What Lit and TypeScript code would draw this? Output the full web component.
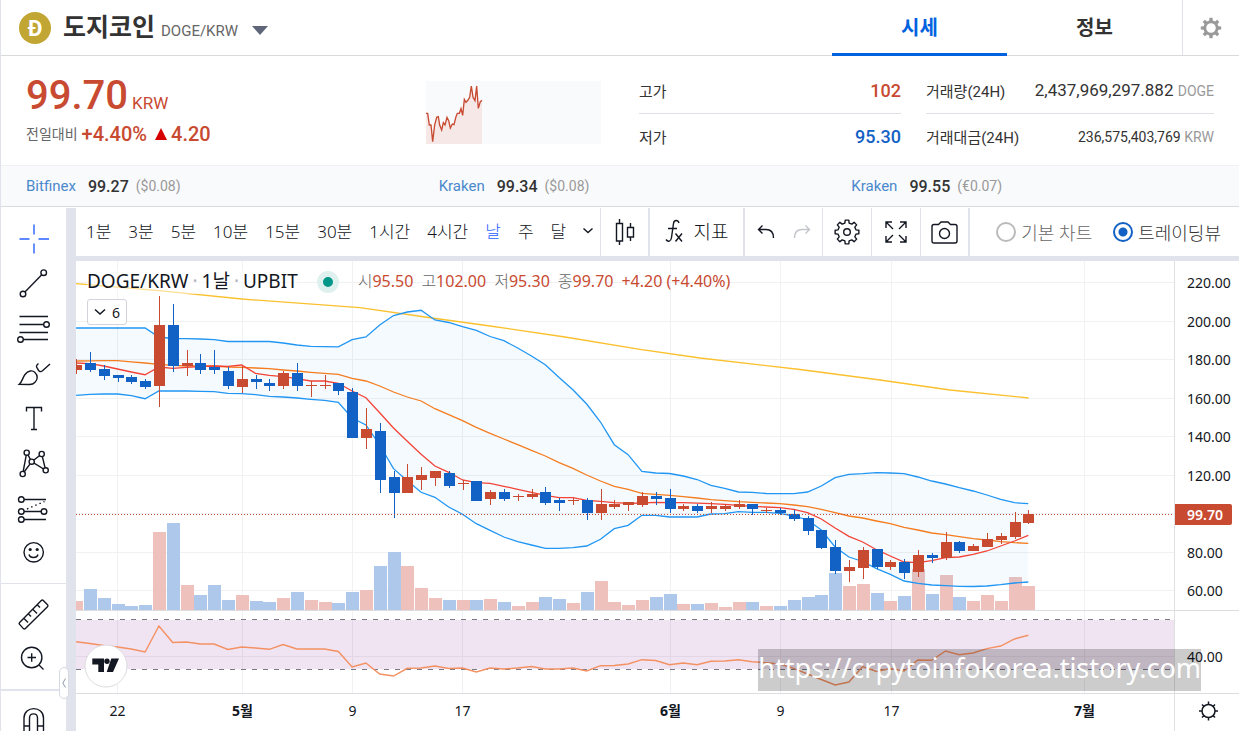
import { LitElement, html, svg, css } from "lit";
import { customElement, state } from "lit/decorators.js";
import { classMap } from "lit/directives/class-map.js";

const UP = "#c84a31";
const DOWN = "#1261c4";

// One entry per day: [up, body top, body bottom, high, low, volume top, oscillator]
type Day = [number, number, number, number, number, number, number];
const FIRST = -3;
const DAYS: Day[] = [
  [1, 365, 370, 359, 374, 601, 641.7], [0, 363, 370, 352, 372, 589, 643.5],
  [0, 369, 376, 365, 380, 598, 645.5], [0, 375, 378, 375, 382, 604, 647],
  [0, 377, 382, 375, 384, 606, 649], [0, 381, 387, 379, 389, 605, 652],
  [1, 325, 386, 296, 407, 532, 626], [0, 325, 366, 304, 372, 523, 642.5],
  [1, 363, 366, 350, 376, 585, 642], [0, 363, 370, 354, 374, 595, 644],
  [0, 367, 370, 350, 374, 585, 644], [0, 371, 386, 367, 389, 600, 649.5],
  [1, 379, 387, 366, 393, 595, 647], [0, 379, 382, 375, 389, 601, 648],
  [0, 383, 386, 379, 391, 602, 649.3], [1, 373, 386, 371, 389, 598, 644.5],
  [0, 373, 386, 363, 391, 592, 649], [1, 385, 386, 381, 397, 600, 649],
  [1, 385, 386, 375, 389, 602, 649], [0, 383, 391, 383, 395, 603, 651.5],
  [0, 392, 438, 388, 438, 592, 667], [1, 429, 438, 408, 449, 590, 663],
  [0, 431, 480, 423, 493, 566, 674], [0, 477, 493, 471, 518, 552, 676],
  [1, 477, 493, 464, 493, 566, 668.3], [1, 475, 480, 467, 490, 588, 668],
  [1, 471, 478, 471, 486, 598, 666], [0, 473, 486, 471, 488, 600, 668.5],
  [1, 483, 484, 480, 490, 600, 668], [0, 481, 501, 481, 501, 600, 672],
  [1, 492, 499, 490, 505, 599, 668], [0, 492, 499, 489, 501, 602, 669],
  [1, 496, 497, 494, 501, 606, 668], [1, 494, 497, 489, 499, 602, 666.5],
  [0, 492, 503, 487, 505, 597, 669], [0, 500, 503, 498, 511, 599, 669],
  [1, 500, 501, 498, 505, 603, 668], [0, 500, 513, 498, 520, 592, 671],
  [1, 504, 513, 489, 520, 581, 665.7], [1, 504, 507, 500, 509, 602, 665.5],
  [1, 502, 505, 502, 511, 605, 664], [1, 496, 505, 492, 507, 600, 659.7],
  [0, 496, 499, 492, 505, 597, 660.5], [0, 498, 509, 489, 513, 594, 664.7],
  [1, 506, 509, 504, 511, 604, 663], [0, 506, 511, 504, 513, 604, 664.7],
  [1, 506, 509, 502, 513, 603, 661.3], [1, 506, 509, 504, 511, 607, 661],
  [1, 504, 507, 500, 509, 602, 659.7], [0, 504, 509, 504, 515, 602, 661.8],
  [1, 510, 511, 508, 513, 606, 662.7], [0, 510, 513, 508, 515, 606, 664],
  [0, 514, 519, 510, 521, 600, 668.3], [0, 518, 531, 516, 535, 597, 674],
  [0, 530, 548, 530, 549, 595, 679.5], [0, 547, 571, 540, 574, 573, 685],
  [1, 567, 571, 560, 582, 586, 682], [1, 550, 568, 547, 579, 584, 666.5],
  [0, 549, 567, 549, 569, 593, 671.5], [1, 562, 567, 560, 570, 601, 668.5],
  [0, 562, 573, 559, 579, 596, 671], [1, 555, 572, 550, 577, 569, 660],
  [0, 555, 558, 553, 563, 594, 660.3], [1, 542, 558, 532, 560, 575, 651],
  [0, 542, 551, 541, 553, 597, 654.7], [1, 546, 551, 544, 551, 601, 653],
  [1, 539, 547, 533, 547, 595, 648.6], [1, 536, 540, 533, 544, 601, 646],
  [1, 522, 537, 512, 539, 577, 639], [1, 514, 523, 510, 524, 586, 635.3],
];

const UPPER = [328, 328, 328, 328, 328, 328, 337, 338.5, 338.7, 339, 339.7, 341.5, 341.5, 341.5, 341.5, 343, 345, 346.3, 346.7, 346.8, 339.7, 337, 325, 315.5, 312, 310.3, 320, 322.5, 326.7, 330.3, 336.5, 340.7, 348, 356, 364.7, 377.5, 389.7, 404, 422, 444.7, 454.7, 471.5, 473, 473.5, 476, 479.5, 485.3, 488.3, 492, 492.3, 493.5, 493.7, 493.7, 492, 486, 477.7, 474.3, 473.7, 472.7, 473, 473.7, 477, 481, 484, 487.7, 491, 495, 499.3, 502.7, 503.7];
const LOWER = [395.3, 394.3, 394, 394, 395.7, 398.7, 391, 391, 391, 391.3, 391.7, 393.3, 393.7, 394.7, 396.3, 397, 398, 399.3, 400.3, 402.3, 418, 425, 445, 468.7, 480.7, 492.3, 497.3, 507, 514.3, 523.7, 530.3, 537, 541.7, 545, 548.3, 548.3, 547.7, 546, 539.3, 528.7, 525.3, 515.3, 515.3, 517, 517, 517, 514, 513.7, 511.7, 512.3, 512.3, 513.3, 516, 520, 530, 547, 557, 561.5, 568.7, 574.3, 581, 583.3, 585, 585.7, 586.3, 586.5, 586, 584.7, 583, 582];
const BASIS = [361, 360.8, 360.7, 360.7, 361.8, 363, 364.3, 365.3, 366, 366, 366, 367, 367.3, 368, 368.7, 370, 371, 372.3, 373.3, 374.3, 378.3, 381, 386, 392, 397, 401, 408.7, 414.7, 420.7, 427.3, 433.3, 439, 444.7, 450.3, 456, 462.7, 468.3, 475, 481, 486.3, 489.3, 493.3, 494.3, 495.3, 496.7, 498, 499.7, 500.7, 501.7, 502.3, 503, 503.7, 505, 506.7, 509.3, 512.7, 516, 518, 521, 523.7, 527.3, 530, 533, 534.7, 536.7, 538.7, 540, 541.7, 542.7, 543.3];
const FAST = [363, 363.7, 366, 369, 372, 374.7, 367, 368.3, 367.3, 366.7, 366, 366.3, 365, 373.3, 375.3, 376.7, 378.7, 381, 381, 383.3, 391, 397.7, 412.7, 428, 441.3, 454.3, 466, 472.3, 480, 482.7, 483.3, 486.3, 489.3, 492.3, 495.3, 497.7, 497.7, 500.3, 501.3, 502.7, 503.3, 503, 502.3, 502.7, 502.7, 503.2, 503.7, 504.3, 505.3, 506.3, 507, 507.7, 509.3, 512.7, 519, 528, 536.3, 542, 549.7, 556, 562, 562.7, 560.7, 557.7, 557, 554.3, 551, 546, 541, 535.3];
const SLOW = "76,283.7 159,290.7 242,299 360,307.7 425,317 490,326 565,337 640,349.3 700,358 800,369.5 880,380 950,390 1028.6,398";

const dayX = (n: number) => 117.5 + 13.8 * (n + FIRST);
const line = (ys: number[]) => ys.map((y, n) => `${dayX(n).toFixed(1)},${y}`);

const PRICES: [string, number][] = [["220.00", 283], ["200.00", 322], ["180.00", 360], ["160.00", 399], ["140.00", 437], ["120.00", 476], ["80.00", 553], ["60.00", 591]];
const DATES: [string, number, boolean][] = [["22", 117.5, false], ["5월", 242.5, true], ["9", 352.5, false], ["17", 462.5, false], ["6월", 670.5, true], ["9", 780.5, false], ["17", 891.5, false], ["7월", 1084.5, true]];

/** Outline of a cog with flat teeth. */
function cog(cx: number, cy: number, outer: number, inner: number, teeth = 8): string {
  const step = (Math.PI * 2) / teeth;
  const pts: string[] = [];
  for (let t = 0; t < teeth; t++) {
    const a = t * step - Math.PI / 2;
    for (const [r, d] of [[inner, -0.3], [outer, -0.19], [outer, 0.19], [inner, 0.3]]) {
      pts.push(`${(cx + r * Math.cos(a + d * step)).toFixed(2)} ${(cy + r * Math.sin(a + d * step)).toFixed(2)}`);
    }
  }
  return `M${pts.join("L")}Z`;
}

interface Tool { name: string; box: string; art: unknown; }
const ring = (x: number, y: number, r = 2.8) => svg`<circle cx=${x} cy=${y} r=${r} fill="#fff"></circle>`;

const TOOLS: Tool[] = [
  { name: "십자선", box: "17 222 34 34", art: svg`<path stroke="#2962ff" d="M34 224.500v10M34 243.500v10M19.500 239h10M38.500 239h10.500"></path>` },
  { name: "추세선", box: "17 267 34 34", art: svg`<path d="M23 294L43.700 272.700"></path>${ring(23, 294)}${ring(43.7, 272.7)}` },
  { name: "피보나치", box: "17 312 34 34", art: svg`<path d="M19.500 316.500H48M19.500 324.500H44M19.500 332.500H48M22 339.500H48"></path>${ring(46.5, 324.5)}${ring(20.5, 339.5)}` },
  { name: "브러시", box: "17 357 34 34", art: svg`<path d="M19.300 384.300C22 382 22.500 378 25 374.500C28 370.500 32.500 369.800 35 372.500C38 375.500 37.800 379.500 35 382.200C33.500 384 32 384.500 29.500 384.500ZM38.500 363.500C36 365.500 36 367 37.500 368.500C38.500 371.500 40.500 372.500 42.500 370.800L50 364"></path>` },
  { name: "텍스트", box: "17 402 34 34", art: svg`<path d="M26.500 411.500v-4h15v4M34 407.500v21.500M31 429.500h6"></path>` },
  { name: "패턴", box: "17 447 34 34", art: svg`<path d="M22.700 474L26.700 452.700L31.700 461.700L41.700 454L45.700 470.300L31.700 461.700Z"></path>${ring(26.7, 452.7, 2.6)}${ring(41.7, 454, 2.6)}${ring(31.7, 461.7, 2.6)}${ring(22.7, 474, 2.6)}${ring(45.7, 470.3, 2.6)}` },
  { name: "예측", box: "17 492 34 34", art: svg`<path d="M24 499.500H46M24 511.500H41M24 519.500H46"></path><path stroke-dasharray="1.500 3" d="M27 509L44.500 501.500"></path>${ring(21.3, 499.5)}${ring(21.3, 511.5)}${ring(44, 511.5)}${ring(21.3, 519.5)}` },
  { name: "아이콘", box: "17 537 34 34", art: svg`<circle cx="33.700" cy="552.300" r="9.700"></circle><path d="M29 554.500C30 558.500 37 558.500 38 554.500"></path><g fill="#131722" stroke="none"><circle cx="30.200" cy="549.500" r="1.600"></circle><circle cx="37.200" cy="549.500" r="1.600"></circle></g>` },
  { name: "측정", box: "17 597 34 34", art: svg`<path d="M19.600 622.400Q18.600 623.400 19.600 624.400L23.400 628.600Q24.400 629.600 25.400 628.600L47.500 606.800Q48.500 605.800 47.500 604.800L43.300 600.500Q42.300 599.500 41.300 600.500ZM24 618.500l4 4M28.500 614l2.500 2.500M33 609.500l4 4M37.500 605l2.500 2.500"></path>` },
  { name: "확대", box: "17 642 34 34", art: svg`<circle cx="31.700" cy="657.500" r="10.200"></circle><path d="M39 665l4.500 4.500M27.500 657.500h8.500M31.700 653.200v8.600"></path>` },
  { name: "자석", box: "17 705 34 34", art: svg`<path d="M24 733V718C24 705.500 43.500 705.500 43.500 718V733M29.500 733V718C29.500 712.500 37.500 712.500 37.500 718V733M24 726h5.500M37.500 726h6"></path>` },
];

@customElement("app-root")
export class AppRoot extends LitElement {
  @state() private interval = "날";
  @state() private mode = "tv";

  static styles = css`
    :host { display: flex; flex-direction: column; height: 100vh; overflow: hidden; box-sizing: border-box; border-left: 1px solid #e0e3eb; background: #fff; color: #333; font-family: Roboto, "Noto Sans CJK KR", sans-serif; font-size: 15px; }
    * { box-sizing: border-box; }
    button { border: 0; padding: 0; background: none; font: inherit; color: inherit; cursor: pointer; }
    svg { display: block; }
    a { text-decoration: none; color: inherit; }
    h1, dl, dd, dt, p { margin: 0; font-weight: 400; }

    .top { display: flex; height: 56px; flex: none; border-bottom: 1px solid #d8dade; }
    .coin { display: flex; align-items: center; flex: 1; padding-left: 18px; }
    .name { margin-left: 12px; font-size: 25px; font-weight: 700; line-height: 54px; }
    .pair { margin: 7px 14px 0 6px; font-size: 15px; color: #666; }
    .tabs { display: flex; }
    .tab { width: 175px; height: 56px; font-size: 20px; font-weight: 700; line-height: 56px; text-align: center; border-bottom: 3px solid transparent; }
    .tab.on { color: #0062df; border-color: #0062df; }
    .settings { width: 57px; height: 55px; display: grid; place-items: center; border-left: 1px solid #e0e0e6; }

    .info { display: flex; flex: none; height: 109px; padding: 15px 25px 0; }
    .now { flex: 1; color: #c84a31; }
    .price { display: flex; align-items: baseline; gap: 4px; font-size: 17px; line-height: 20px; }
    .price strong { font-size: 40px; font-weight: 500; line-height: 50px; }
    .change { display: flex; align-items: center; gap: 4px; font-size: 20px; font-weight: 500; line-height: 26px; }
    .change span { font-size: 14px; font-weight: 400; color: #666; }
    .change svg { margin: 0 0 0 4px; }
    .spark { width: 175px; height: 63px; margin: 10px 38px 0 0; background: #f9fafc; }
    .stats { width: 262px; margin-right: 25px; }
    .stats.wide { width: 288px; margin-right: 0; }
    .stats div { display: flex; justify-content: space-between; align-items: center; height: 45px; font-size: 15px; }
    .stats div:first-child { height: 43px; border-bottom: 1px solid #e0e0e6; padding-bottom: 4px; }
    .stats dd { font-size: 18px; font-weight: 500; }
    .stats.wide dd { font-size: 17px; font-weight: 400; }
    .wide dd small { font-size: 14px; color: #999; }
    .stats.wide dd.small { font-size: 14px; }
    .high { color: #c84a31; }
    .low { color: #1261c4; }

    .markets { display: flex; flex: none; height: 42px; background: #f9fafc; border-top: 1px solid #f1f1f4; border-bottom: 1px solid #d8dade; }
    .markets p { display: flex; flex: 1; align-items: center; padding-left: 25px; }
    .markets a { color: #4a89cc; margin-right: 12px; }
    .markets b { font-weight: 500; font-size: 16px; margin-right: 7px; }
    .markets span { font-size: 14px; color: #999; }

    .work { display: flex; flex: 1; min-height: 0; padding-top: 1px; font-family: "Noto Sans", "Noto Sans CJK KR", sans-serif; color: #131722; }
    .tools { width: 65px; flex: none; padding-top: 8px; overflow: hidden; }
    .tools button { display: grid; place-items: center; width: 65px; height: 45px; }
    .tools svg { width: 34px; height: 34px; fill: none; stroke: #131722; stroke-width: 1.4; }
    .tools hr { height: 1px; margin: 7px 0; border: 0; background: #e0e3eb; }
    .tools hr.low-rule { height: 2px; margin: 8px 0; }
    .rail { position: relative; width: 10px; flex: none; background: #e0e3eb; }
    .fold { position: absolute; left: -7px; top: 459px; width: 10px; height: 32px; border: 1px solid #d5d9e2; border-radius: 5px; background: #fff; display: grid; place-items: center; }

    .main { flex: 1; min-width: 0; display: flex; flex-direction: column; }
    .bar { display: flex; flex: none; height: 53px; border-bottom: 5px solid #e0e3eb; font-size: 17px; font-weight: 300; }
    .bar svg { fill: none; stroke: #131722; stroke-width: 1.4; }
    .cell { display: flex; align-items: center; justify-content: center; flex: none; width: 49px; border-right: 1px solid #e0e3eb; }
    .cell.times { width: 525px; justify-content: flex-start; gap: 1px; padding: 0 0 3px 2px; }
    .times button { height: 40px; padding: 0 8px; white-space: nowrap; }
    .times button.on { color: #2962ff; }
    .cell.thick { border-right-width: 2px; }
    .cell.study { width: 95px; padding-bottom: 2px; }
    .study button { display: flex; align-items: center; gap: 11px; font-size: 19px; }
    .cell.history { width: 78px; gap: 18px; }
    .modes { display: flex; flex: 1; justify-content: flex-end; align-items: center; gap: 21px; padding: 0 18px 1px 0; font-size: 18px; }
    .modes label { display: flex; align-items: center; gap: 5px; color: #666; white-space: nowrap; }
    .modes label.on { color: #333; }
    .modes input { appearance: none; width: 20px; height: 20px; margin: 0; border: 2px solid #bbb; border-radius: 50%; background: #fff; }
    .modes input:checked { border-color: #1261c4; background: radial-gradient(circle, #1261c4 4px, #fff 5px); }

    .chart { position: relative; display: flex; flex: 1; min-height: 0; }
    .plot { flex: 1; min-width: 0; height: 470px; }
    .scale { width: 65px; flex: none; height: 470px; border-left: 1px solid #e0e0e0; }
    .plot text, .scale text { font-size: 14px; fill: #131722; }
    .plot text.month { font-weight: 700; }
    .scale text.tag { fill: #fff; font-weight: 600; }
    .legend { position: absolute; left: 11px; top: 8px; display: flex; align-items: center; height: 26px; white-space: nowrap; }
    .symbol { font-size: 19px; line-height: 22px; padding-bottom: 2px; background: rgba(255, 255, 255, 0.5); }
    .symbol i { margin: 0 4px; font-style: normal; color: #b2b5be; }
    .live { width: 22px; height: 22px; margin: 0 19px; border: 6px solid #dff1ee; border-radius: 50%; background: #009688; }
    .ohlc { display: flex; gap: 8px; font-size: 16px; font-weight: 300; line-height: 22px; padding-bottom: 2px; color: #666; }
    .ohlc b { font-weight: 400; color: #c84a31; }
    .studies { position: absolute; left: 11px; top: 38px; width: 40px; height: 26px; display: flex; align-items: center; justify-content: center; gap: 6px; border: 1px solid #d1d4dc; border-radius: 3px; background: #fff; font-size: 14px; }
    .brand { position: absolute; left: 8px; top: 383px; }
    .stamp { position: absolute; right: 38px; top: 388px; height: 42px; line-height: 38px; background: rgba(0, 0, 0, 0.2); color: #fff; font-size: 27px; }
  `;

  private times = ["1분", "3분", "5분", "10분", "15분", "30분", "1시간", "4시간", "날", "주", "달"];

  private renderPlot() {
    const upper = line(UPPER);
    const lower = line(LOWER);
    return html`<svg class="plot" role="img" aria-label="DOGE/KRW 일봉 차트">
      <g transform="translate(-76 -261)">
        <g shape-rendering="crispEdges" stroke="#f0f1f3">
          ${[...PRICES.map((p) => p[1] - 0.5), 513.5, 656.5].map((y) => svg`<line x1="76" x2="4000" y1=${y} y2=${y}></line>`)}
          ${DATES.map((d) => svg`<line x1=${d[1]} x2=${d[1]} y1="261" y2="693"></line>`)}
        </g>
        ${DAYS.map((d, n) => svg`<rect x=${Math.round(dayX(n)) - 6} y=${d[5]} width="13" height=${610 - d[5]} fill=${d[0] ? "#efc1bd" : "#adc8eb"}></rect>`)}
        <g fill="none" stroke-width="1.300">
          <polygon fill="#2196f3" fill-opacity="0.050" points=${[...upper, ...[...lower].reverse()].join(" ")}></polygon>
          <polyline stroke="#fbc02d" points=${SLOW}></polyline>
          <polyline stroke="#2196f3" points=${upper.join(" ")}></polyline>
          <polyline stroke="#2196f3" points=${lower.join(" ")}></polyline>
          <polyline stroke="#f57c1f" points=${line(BASIS).join(" ")}></polyline>
          <polyline stroke="#f44336" points=${line(FAST).join(" ")}></polyline>
        </g>
        <g shape-rendering="crispEdges">
          ${DAYS.map((d, n) => {
            const x = Math.round(dayX(n));
            const c = d[0] ? UP : DOWN;
            return svg`<rect x=${x} y=${d[3]} width="1" height=${d[4] - d[3]} fill=${c}></rect><rect x=${x - 5} y=${d[1]} width="11" height=${d[2] - d[1]} fill=${c}></rect>`;
          })}
          <line x1="76" x2="4000" y1="514.500" y2="514.500" stroke=${UP} stroke-dasharray="1 2"></line>
          <line x1="76" x2="4000" y1="610.500" y2="610.500" stroke="#dcdde0"></line>
          <rect x="76" y="620" width="4000" height="49" fill="#8e2090" fill-opacity="0.120"></rect>
          <path d="M76 619.500H4000M76 669.500H4000" stroke="#787b86" stroke-dasharray="5 6"></path>
          <line x1="76" x2="4000" y1="693.500" y2="693.500" stroke="#dcdde0"></line>
        </g>
        <polyline fill="none" stroke="#f39163" stroke-width="1.400" points=${line(DAYS.map((d) => d[6])).join(" ")}></polyline>
        ${DATES.map((d) => svg`<text class=${d[2] ? "month" : "day"} x=${d[1]} y="716" text-anchor="middle">${d[0]}</text>`)}
      </g>
    </svg>`;
  }

  private renderScale() {
    return html`<svg class="scale" aria-hidden="true">
      ${PRICES.map((p) => svg`<text x="12" y=${p[1] - 256}>${p[0]}</text>`)}
      <text x="12" y="401">40.00</text>
      <path d="M0 349.500H65M0 432.500H65" stroke="#dcdde0"></path>
      <path d="M0 243h55q2 0 2 2v17q0 2-2 2H0z" fill=${UP}></path>
      <text class="tag" x="12" y="259">99.70</text>
      <g fill="none" stroke="#131722" stroke-width="1.500">
        <circle cx="33.500" cy="450" r="6.500"></circle>
        <path d="M33.500 440.500v3M33.500 456.500v3M24 450h3M40 450h3M27 443.500l2 2M38 454.500l2 2M40 443.500l-2 2M27 456.500l2-2"></path>
      </g>
    </svg>`;
  }

  private tool(t: Tool) {
    return html`<button aria-label=${t.name}><svg viewBox=${t.box}>${t.art}</svg></button>`;
  }

  render() {
    return html`
      <header class="top">
        <div class="coin">
          <svg width="32" height="32" aria-hidden="true"><circle cx="16" cy="16" r="16" fill="#c1a634"></circle><text x="16" y="24" text-anchor="middle" font-size="22" font-weight="700" fill="#fff">Ð</text></svg>
          <h1 class="name">도지코인</h1>
          <span class="pair">DOGE/KRW</span>
          <button aria-label="코인 선택"><svg width="16" height="15"><path d="M0 6h16l-8 9z" fill="#5f6679"></path></svg></button>
        </div>
        <nav class="tabs"><a class="tab on" href="#price">시세</a><a class="tab" href="#about">정보</a></nav>
        <button class="settings" aria-label="설정"><svg width="22" height="22"><path fill="#999" fill-rule="evenodd" d="${cog(11, 11, 10.3, 7.6)}M11 6.200a4.800 4.800 0 1 0 0 9.600a4.800 4.800 0 1 0 0-9.600Z"></path></svg></button>
      </header>

      <section class="info">
        <div class="now">
          <p class="price"><strong>99.70</strong>KRW</p>
          <p class="change"><span>전일대비</span>+4.40%<svg width="12" height="12"><path d="M6 0l6 12H0z" fill="#d60000"></path></svg>4.20</p>
        </div>
        <svg class="spark" viewBox="48 93 525 189" aria-hidden="true">
          <path fill="#f5e8e6" d="M48 282V190H53L58 225H63L68 275L74 225L80 202L85 200L89 225L95 240L100 218L105 225L111 202L116 212L121 234L127 222L132 224L138 200L142 190H148L153 176L158 196L163 148L168 157L174 150L179 142L184 108L189 142L195 152L200 108L205 175L211 155L216 151V282Z"></path>
          <polyline fill="none" stroke=${UP} stroke-width="4" points="48,190 53,190 58,225 63,225 68,275 74,225 80,202 85,200 89,225 95,240 100,218 105,225 111,202 116,212 121,234 127,222 132,224 138,200 142,190 148,190 153,176 158,196 163,148 168,157 174,150 179,142 184,108 189,142 195,152 200,108 205,175 211,155 216,151"></polyline>
        </svg>
        <dl class="stats">
          <div><dt>고가</dt><dd class="high">102</dd></div>
          <div><dt>저가</dt><dd class="low">95.30</dd></div>
        </dl>
        <dl class="stats wide">
          <div><dt>거래량(24H)</dt><dd>2,437,969,297.882 <small>DOGE</small></dd></div>
          <div><dt>거래대금(24H)</dt><dd class="small">236,575,403,769 <small>KRW</small></dd></div>
        </dl>
      </section>

      <section class="markets">
        <p><a href="#bitfinex">Bitfinex</a><b>99.27</b><span>($0.08)</span></p>
        <p><a href="#kraken-usd">Kraken</a><b>99.34</b><span>($0.08)</span></p>
        <p><a href="#kraken-eur">Kraken</a><b>99.55</b><span>(€0.07)</span></p>
      </section>

      <section class="work">
        <div class="tools">
          ${TOOLS.slice(0, 8).map((t) => this.tool(t))}
          <hr />
          ${TOOLS.slice(8, 10).map((t) => this.tool(t))}
          <hr class="low-rule" />
          ${this.tool(TOOLS[10])}
        </div>
        <div class="rail"><button class="fold" aria-label="도구 접기"><svg width="4" height="10" fill="none" stroke="#8797a5"><path d="M3.500 .5L.8 5l2.700 4.500"></path></svg></button></div>
        <div class="main">
          <div class="bar">
            <div class="cell times">
              ${this.times.map((t) => html`<button class=${classMap({ on: t === this.interval })} @click=${() => (this.interval = t)}>${t}</button>`)}
              <button aria-label="더보기"><svg width="10" height="6"><path d="M.5 .5L5 4.500L9.500 .5"></path></svg></button>
            </div>
            <div class="cell thick"><button aria-label="차트 종류"><svg width="20" height="26"><path d="M4.500 0v4M4.500 22v4M1.500 4.500h6v17.500h-6zM15.500 4v4M15.500 18v4M12.500 8.500h6v9.500h-6z"></path></svg></button></div>
            <div class="cell thick study"><button><svg width="18" height="24"><path d="M14 4C13 .5 9 .5 8.500 4.500L6.500 18.500C6 22.500 3 23.500 1 20.500M3 9.500h9M10.500 14.500l6.500 8M17 14.500l-6.500 8"></path></svg>지표</button></div>
            <div class="cell history">
              <button aria-label="실행 취소"><svg width="18" height="14"><path d="M5.500 .5L1.500 4.500l4 4M1.500 4.500H9C14 4.500 16.500 8 16.500 13"></path></svg></button>
              <button aria-label="다시 실행"><svg width="18" height="14"><path stroke="#c3c5cb" d="M12.500 .5l4 4l-4 4M16.500 4.500H9C4 4.500 1.500 8 1.500 13"></path></svg></button>
            </div>
            <div class="cell"><button aria-label="차트 설정"><svg width="26" height="26"><path stroke-linejoin="round" d=${cog(13, 13, 12, 9.2)}></path><circle cx="13" cy="13" r="3.300"></circle></svg></button></div>
            <div class="cell"><button aria-label="전체 화면"><svg width="22" height="22"><path d="M1 7V1h6M1 1l7 7M15 1h6v6M21 1l-7 7M1 15v6h6M1 21l7-7M21 15v6h-6M21 21l-7-7"></path></svg></button></div>
            <div class="cell thick"><button aria-label="스크린샷"><svg width="27" height="23"><path d="M3 3.500h4.500l2.500-2.500h7l2.500 2.500H24q2 0 2 2V20q0 2-2 2H3q-2 0-2-2V5.500q0-2 2-2z"></path><circle cx="13.500" cy="12.500" r="5"></circle></svg></button></div>
            <div class="modes">
              <label class=${classMap({ on: this.mode === "basic" })}><input type="radio" name="mode" .checked=${this.mode === "basic"} @change=${() => (this.mode = "basic")} />기본 차트</label>
              <label class=${classMap({ on: this.mode === "tv" })}><input type="radio" name="mode" .checked=${this.mode === "tv"} @change=${() => (this.mode = "tv")} />트레이딩뷰</label>
            </div>
          </div>
          <div class="chart">
            ${this.renderPlot()}${this.renderScale()}
            <div class="legend">
              <span class="symbol">DOGE/KRW<i>·</i>1날<i>·</i>UPBIT</span>
              <span class="live"></span>
              <span class="ohlc"><span>시<b>95.50</b></span><span>고<b>102.00</b></span><span>저<b>95.30</b></span><span>종<b>99.70</b></span><b>+4.20 (+4.40%)</b></span>
            </div>
            <button class="studies"><svg width="12" height="8" fill="none" stroke="#131722" stroke-width="1.500"><path d="M1 1.500l5 4.500l5-4.500"></path></svg>6</button>
            <svg class="brand" width="44" height="44" aria-label="TradingView"><circle cx="22" cy="22" r="21" fill="#fff" stroke="#dcdde0"></circle><g fill="#131722"><path d="M8.300 14.500h11.700v13.500h-5.700v-7.500h-6zM27.300 14.500H35L29 28h-6.300z"></path><circle cx="23" cy="17.200" r="2.700"></circle></g></svg>
            <div class="stamp">https://crpytoinfokorea.tistory.com</div>
          </div>
        </div>
      </section>
    `;
  }
}
